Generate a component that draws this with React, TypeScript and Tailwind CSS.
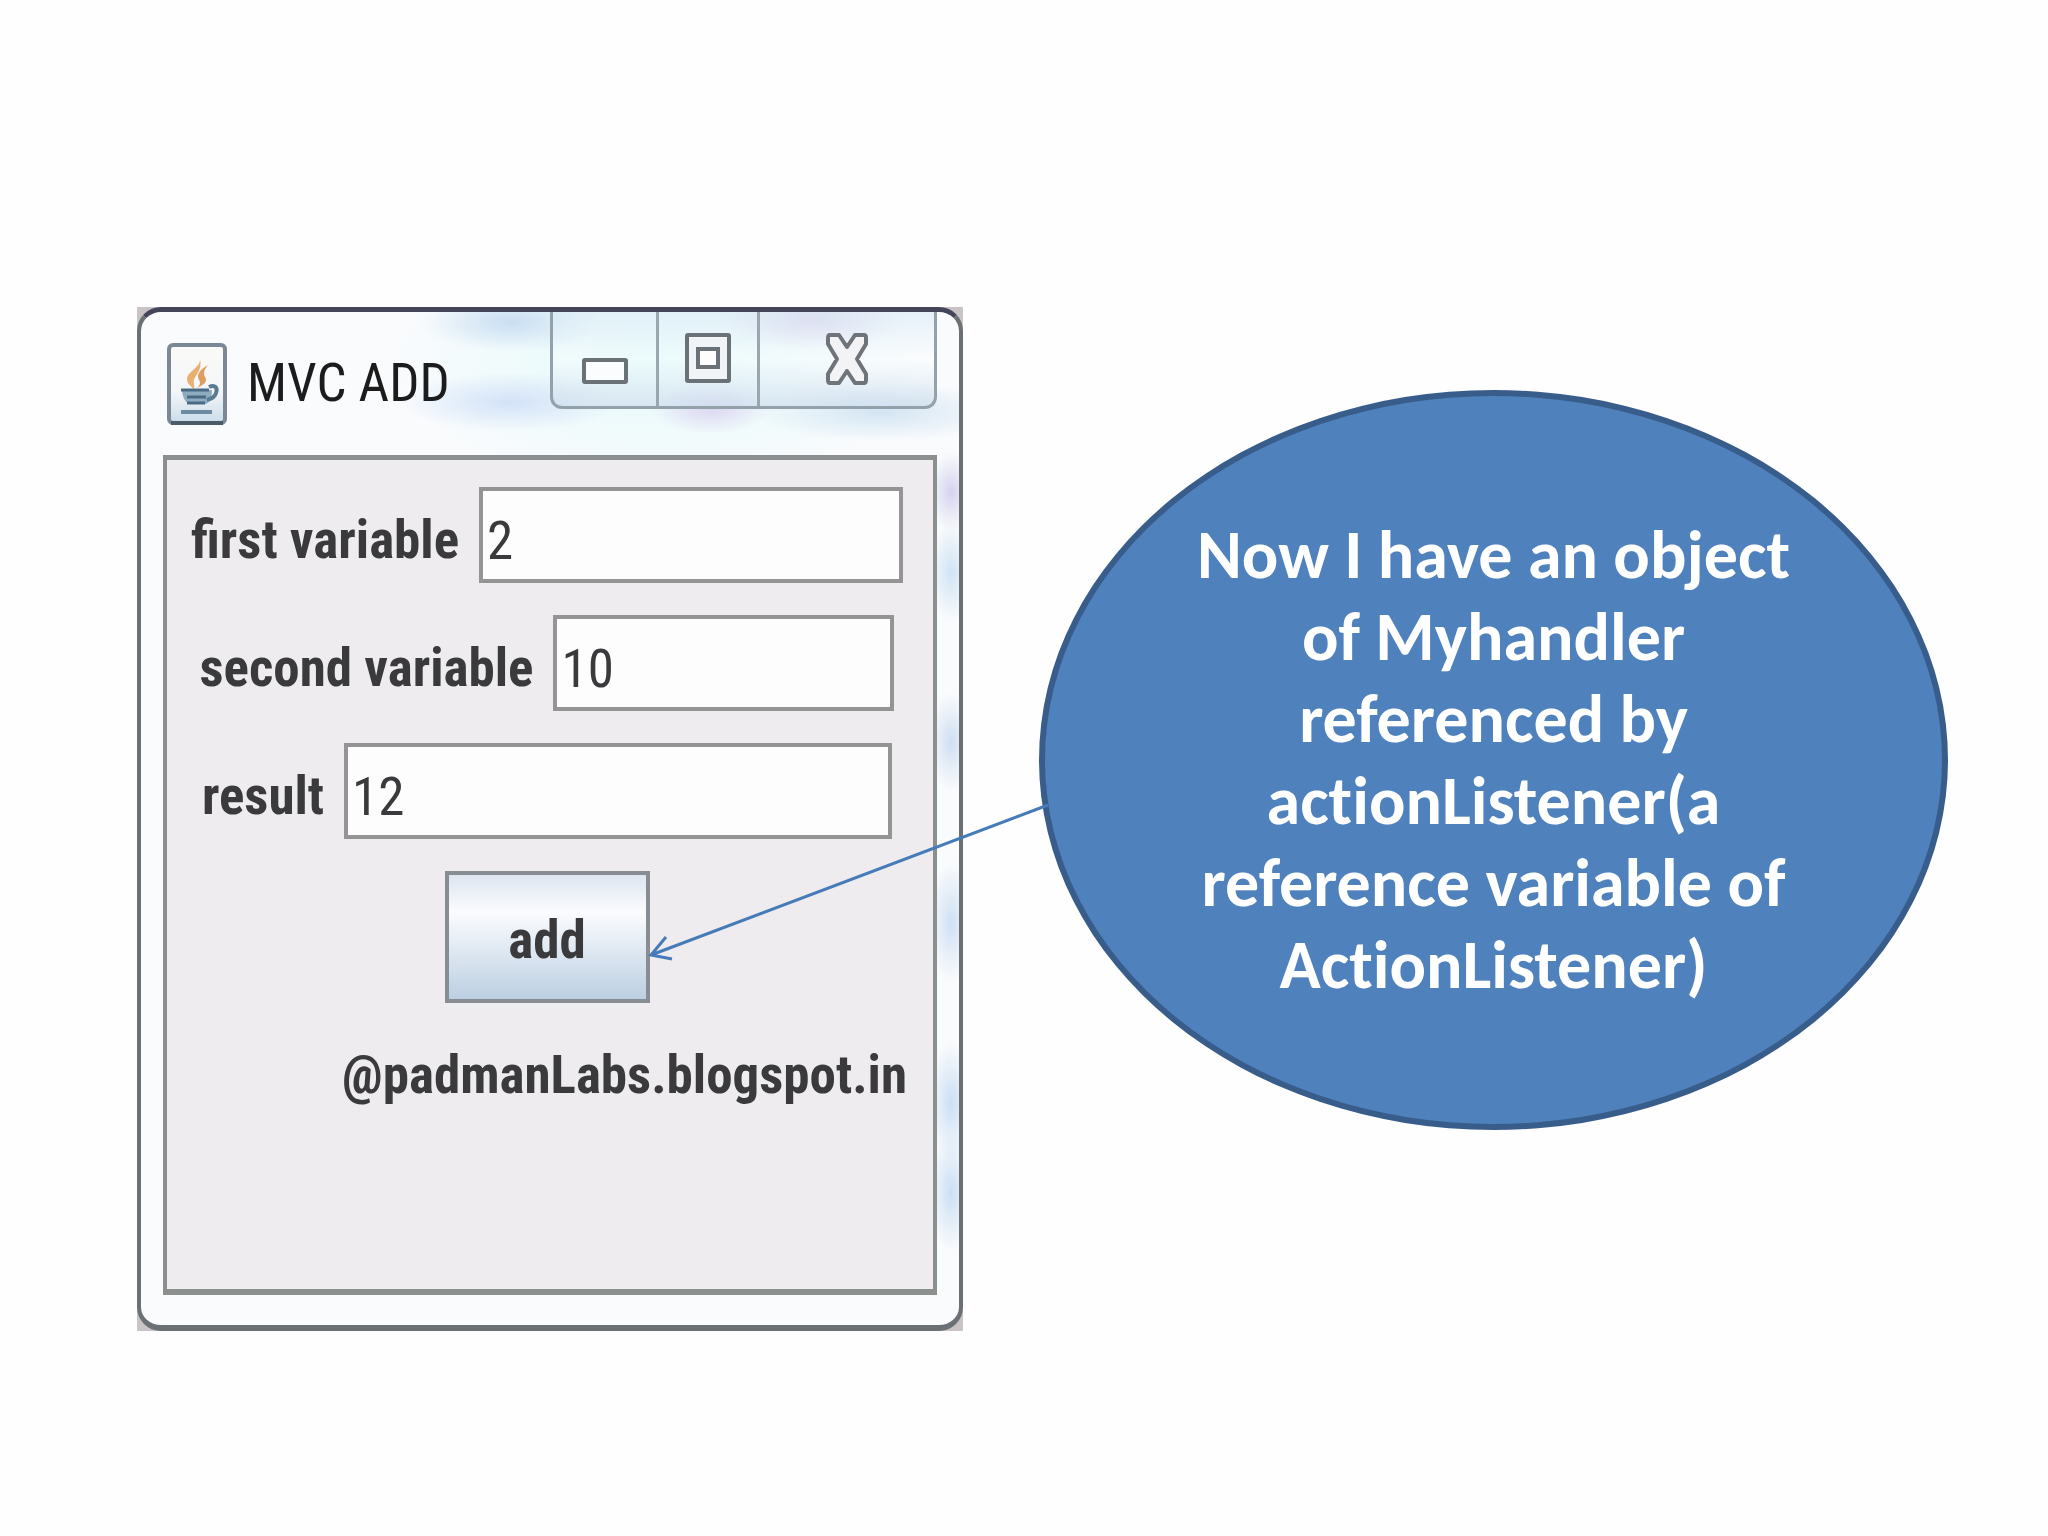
import type { ReactNode } from "react";

interface FieldRowProps {
  id: string;
  label: string;
  value: string;
  inputClass: string;
}

// One label + text box line, centered like a Swing FlowLayout
function FieldRow({ id, label, value, inputClass }: FieldRowProps) {
  return (
    <div className="flex items-center justify-center gap-5">
      <label htmlFor={id} className="whitespace-nowrap pt-3 font-bold">
        {label}
      </label>
      <input
        id={id}
        type="text"
        defaultValue={value}
        className={`h-24 min-w-0 border-4 border-[#949494] bg-[#fdfdfe] px-1 pt-3 outline-none ${inputClass}`}
      />
    </div>
  );
}

function JavaIcon() {
  return (
    <svg viewBox="0 0 60 82" className="ml-1 h-[82px] w-[60px] shrink-0" aria-hidden="true">
      <defs>
        <linearGradient id="tile" x1="0" y1="0" x2="0" y2="1">
          <stop offset="0" stopColor="#fbfaf8" />
          <stop offset="0.6" stopColor="#f4f6f8" />
          <stop offset="1" stopColor="#c9dcea" />
        </linearGradient>
      </defs>
      <rect x="2" y="2" width="56" height="78" rx="4" fill="url(#tile)" stroke="#7b8896" strokeWidth="4" />
      <path d="M4 80h52" stroke="#4d5a68" strokeWidth="4" />
      <path
        d="M32 14c5 9-12 14-12 22 0 5 4 7 7 10 1-4-1-6 0-9 2-6 10-12 5-23z"
        fill="#e9b070"
      />
      <path d="M41 22c-8 5-12 9-9 15 2 3 1 5-2 8 7-3 11-7 8-11-2-4-1-7 3-12z" fill="#dc9f60" />
      <path d="M15 47h30c0 7-2 12-6 14H22c-4-2-7-8-7-14z" fill="#8eabc0" />
      <path d="M14 47h28M20 54h19M20 60h18" stroke="#4a6a84" strokeWidth="3" fill="none" />
      <path d="M42 44c6-3 9 1 7 6-1 4-5 6-9 7" stroke="#5a7b94" strokeWidth="4" fill="none" />
      <path d="M14 69h31" stroke="#6d8ba0" strokeWidth="4" fill="none" />
    </svg>
  );
}

interface CaptionButtonProps {
  label: string;
  className: string;
  children: ReactNode;
}

function CaptionButton({ label, className, children }: CaptionButtonProps) {
  return (
    <button type="button" aria-label={label} className={`flex items-start justify-center ${className}`}>
      {children}
    </button>
  );
}

function CaptionButtons() {
  return (
    <div className="ml-auto flex h-[97px] w-[387px] shrink-0 self-start rounded-b-xl border-3 border-t-0 border-[#93a1ab] bg-linear-to-b from-[#d9eaf6]/60 via-white/30 to-[#cfdfee]/70">
      <CaptionButton label="Minimize" className="w-[106px] border-r-3 border-[#9ba7af] pt-[46px]">
        <svg viewBox="0 0 46 26" className="h-[26px] w-[46px]">
          <rect x="2" y="2" width="42" height="22" rx="1" fill="#fbfcfd" stroke="#6a7177" strokeWidth="4" />
        </svg>
      </CaptionButton>
      <CaptionButton label="Maximize" className="w-[101px] border-r-3 border-[#9ba7af] pt-[21px]">
        <svg viewBox="0 0 46 50" className="h-[50px] w-[46px]">
          <rect x="2" y="2" width="42" height="46" rx="1" fill="#f1f4f6" stroke="#6a7177" strokeWidth="4" />
          <rect x="13" y="16" width="20" height="18" fill="#fdfdfe" stroke="#6a7177" strokeWidth="4" />
        </svg>
      </CaptionButton>
      <CaptionButton label="Close" className="flex-1 pt-[21px]">
        <svg viewBox="0 0 42 52" className="h-[52px] w-[42px]">
          <path
            d="M4 2h9l8 12 8-12h9q2 0 2 3v6L31 26l9 15v6q0 3-2 3h-9l-8-12-8 12H4q-2 0-2-3v-6l9-15L2 11V5q0-3 2-3z"
            fill="#f3f3f5"
            stroke="#6f737a"
            strokeWidth="4"
            strokeLinejoin="round"
          />
        </svg>
      </CaptionButton>
    </div>
  );
}

// Runs from the callout to the right edge of the add button
function Connector() {
  return (
    <svg
      viewBox="0 0 400 154"
      className="pointer-events-none absolute bottom-[46px] left-full h-[154px] w-[400px] max-w-none overflow-visible"
      aria-hidden="true"
    >
      <path d="M398 2L1 152M16 134L1 152l21 4" fill="none" stroke="#457bb9" strokeWidth="3" />
    </svg>
  );
}

function SwingWindow() {
  return (
    <section className="bg-[#c9c3c6]">
      <div className="rounded-[24px] border-4 border-t-5 border-b-6 border-[#6b7074] border-t-[#45455a] bg-[#fafbfd] bg-[radial-gradient(ellipse_90px_30px_at_370px_10px,#c9def2,transparent),radial-gradient(ellipse_110px_30px_at_370px_90px,#d3e2f8,transparent),radial-gradient(ellipse_60px_26px_at_570px_96px,#dcd6f2,transparent),radial-gradient(ellipse_90px_30px_at_670px_8px,#dcd2ec,transparent),radial-gradient(ellipse_130px_30px_at_740px_100px,#d3e5f3,transparent),radial-gradient(ellipse_280px_130px_at_520px_50px,#e4fafa,transparent),radial-gradient(ellipse_22px_40px_at_810px_180px,#d5d3ee,transparent),radial-gradient(ellipse_22px_50px_at_810px_260px,#cfe4f2,transparent),radial-gradient(ellipse_22px_50px_at_810px_430px,#cfdff0,transparent),radial-gradient(ellipse_22px_60px_at_810px_610px,#cfe0f2,transparent),radial-gradient(ellipse_22px_60px_at_810px_790px,#cbdff2,transparent),radial-gradient(ellipse_22px_60px_at_810px_880px,#cbdff2,transparent)] px-[22px] pb-[30px]">
        <header className="flex h-[143px] items-center">
          <JavaIcon />
          <h1 className="ml-5 whitespace-nowrap leading-none text-[#1c1c1c]">MVC ADD</h1>
          <CaptionButtons />
        </header>

        <form
          className="flex flex-col gap-8 border-4 border-t-5 border-b-6 border-[#8b908f] bg-[#eeecee] pt-[27px] pr-[6px] pb-[174px]"
          onSubmit={(e) => e.preventDefault()}
        >
          <FieldRow id="first" label="first variable" value="2" inputClass="w-[424px]" />
          <FieldRow id="second" label="second variable" value="10" inputClass="w-[341px]" />
          <FieldRow id="result" label="result" value="12" inputClass="w-[548px]" />
          <div className="relative z-10 self-center">
            <button
              type="submit"
              className="block h-[132px] w-[205px] border-4 border-[#878d93] bg-linear-to-b from-[#dde5f0] via-[#fbfcfe] via-30% to-[#bccfe2] pt-2 font-bold"
            >
              add
            </button>
            <Connector />
          </div>
          <p className="mr-5 self-end text-right font-bold leading-20">@padmanLabs.blogspot.in</p>
        </form>
      </div>
    </section>
  );
}

function Callout() {
  return (
    <aside className="mt-[83px] flex aspect-[909/740] items-center justify-center rounded-[50%] border-6 border-[#385d8a] bg-[#4f81bd] text-center font-['Carlito','Lato',sans-serif] text-[68px] font-bold leading-[82px] text-white [font-variant-ligatures:none]">
      <p className="max-w-[630px]">
        Now I have an object of Myhandler referenced by actionListener(a reference variable of ActionListener)
      </p>
    </aside>
  );
}

export default function App() {
  return (
    <main className="min-h-screen bg-[#fefefe] pt-[307px] pr-[100px] pl-[137px] font-['Roboto_Condensed','Liberation_Sans',sans-serif] text-[53px] text-[#3a3a3c]">
      <div className="grid grid-cols-[minmax(0,826fr)_minmax(0,909fr)] items-start gap-x-19">
        <SwingWindow />
        <Callout />
      </div>
    </main>
  );
}
